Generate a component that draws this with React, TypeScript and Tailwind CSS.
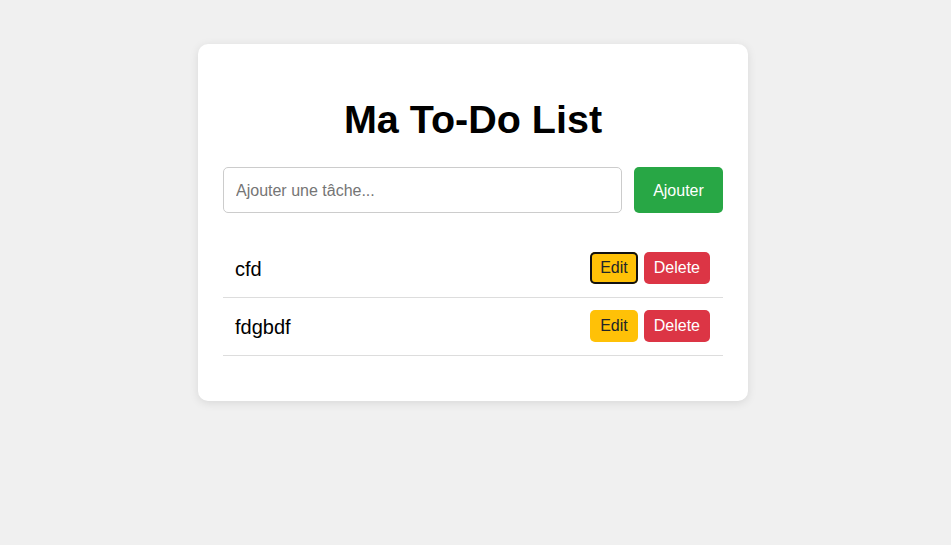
import { useState } from "react";

type Todo = { id: number; text: string };

export default function App() {
  const [todos] = useState<Todo[]>([
    { id: 1, text: "cfd" },
    { id: 2, text: "fdgbdf" },
  ]);
  const [value, setValue] = useState("");

  return (
    <main className="min-h-screen bg-[#f0f0f0] pt-[44px] flex justify-center pr-[5px] font-['Liberation_Sans',Arial,sans-serif]">
      <div className="w-[550px] h-fit bg-white rounded-[10px] shadow-[0_2px_10px_rgba(0,0,0,0.1)] px-[25px] pt-[52px] pb-[45px]">
        <h1 className="text-center text-[39.5px] font-bold leading-[46px] text-black">Ma To-Do List</h1>

        <div className="flex gap-[12px] mt-[25px]">
          <input
            value={value}
            onChange={(e) => setValue(e.target.value)}
            placeholder="Ajouter une tâche..."
            className="w-[399px] h-[46px] border border-[#ccc] rounded-[5px] px-[12px] pt-[1px] text-[16px] text-black placeholder:text-[#757575] outline-none"
          />
          <button className="w-[89px] h-[46px] pt-[1px] bg-[#28a745] text-white text-[16px] rounded-[5px]">Ajouter</button>
        </div>

        <ul className="mt-[27px]">
          {todos.map((t, i) => (
            <li key={t.id} className="h-[58px] flex items-center justify-between border-b border-[#ddd] pl-[12px] pr-[13px] pb-[1px]">
              <span className="text-[20px] text-black pt-[2px]">{t.text}</span>
              <div className="flex gap-[6px]">
                <button
                  className={
                    "h-[32px] px-[10px] bg-[#ffc107] text-[#212529] text-[16px] rounded-[5px] " +
                    (i === 0 ? "ring-2 ring-inset ring-[#111]" : "")
                  }
                >
                  Edit
                </button>
                <button className="h-[32px] px-[10px] bg-[#dc3545] text-white text-[16px] rounded-[5px]">Delete</button>
              </div>
            </li>
          ))}
        </ul>
      </div>
    </main>
  );
}
